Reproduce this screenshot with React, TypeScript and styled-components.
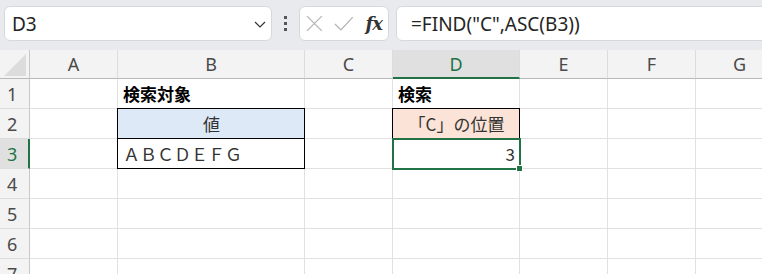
import React from 'react';
import styled, { createGlobalStyle, css } from 'styled-components';

const GlobalStyle = createGlobalStyle`
  html, body {
    margin: 0;
    padding: 0;
    background: #ffffff;
  }
  body {
    font-family: "Noto Sans", "Noto Sans CJK JP", sans-serif;
  }
`

const Page = styled.div`
  width: 762px;
  height: 274px;
  overflow: hidden;
  display: flex;
  flex-direction: column;
`

const TopBar = styled.div`
  height: 50px;
  flex-shrink: 0;
  box-sizing: border-box;
  padding: 6px 0 9px 4px;
  background: #e8eaee;
  display: flex;
  align-items: stretch;
`

const NameBox = styled.div`
  width: 268px;
  box-sizing: border-box;
  background: #ffffff;
  border: 1px solid #d6d8dc;
  border-radius: 6px;
  display: flex;
  align-items: center;
  justify-content: space-between;
  padding: 0 4px 0 7px;
  font-size: 19px;
  color: #242424;
`

const Dots = styled.div`
  width: 27px;
  display: flex;
  flex-direction: column;
  align-items: center;
  justify-content: center;
  gap: 3px;

  span {
    width: 3px;
    height: 3px;
    background: #555;
  }
`

const IconBox = styled.div`
  width: 90px;
  box-sizing: border-box;
  background: #ffffff;
  border: 1px solid #d6d8dc;
  border-radius: 6px;
  display: flex;
  align-items: center;
  padding: 0 6px 0 6px;
  gap: 11px;
`

const Fx = styled.span`
  font-family: "DejaVu Serif", "Liberation Serif", serif;
  font-style: italic;
  font-weight: bold;
  font-size: 18px;
  color: #333;
  margin-left: 1px;
  letter-spacing: -1px;
`

const FormulaBox = styled.div`
  flex: 1;
  margin-left: 7px;
  margin-right: -12px;
  box-sizing: border-box;
  background: #ffffff;
  border: 1px solid #d6d8dc;
  border-radius: 6px;
  display: flex;
  align-items: center;
  padding-left: 14px;
  font-size: 19px;
  color: #242424;
`

const Sheet = styled.div`
  display: grid;
  grid-template-columns: 30px 88px 187px 88px 127px 88px 88px 88px;
  grid-template-rows: 29px repeat(7, 30px);
  width: 794px;
`

const Corner = styled.div`
  position: relative;
  background: #f3f3f3;
  border-right: 1px solid #c8c8c8;
  border-bottom: 1px solid #b8b8b8;

  &::after {
    content: "";
    position: absolute;
    right: 3px;
    bottom: 2px;
    border-style: solid;
    border-width: 0 0 22px 22px;
    border-color: transparent transparent #dcdcdc transparent;
  }
`

const ColHeader = styled.div<{ $active?: boolean }>`
  box-sizing: border-box;
  background: ${p => (p.$active ? '#e0e0e0' : '#f3f3f3')};
  border-right: 1px solid #dcdcdc;
  border-bottom: ${p => (p.$active ? '2px solid #217346' : '1px solid #b8b8b8')};
  display: flex;
  align-items: center;
  justify-content: center;
  padding-top: ${p => (p.$active ? '1px' : '0')};
  font-size: 18px;
  color: ${p => (p.$active ? '#217346' : '#4a4a4a')};
`

const RowHeader = styled.div<{ $active?: boolean }>`
  box-sizing: border-box;
  background: ${p => (p.$active ? '#e0e0e0' : '#f3f3f3')};
  border-right: ${p => (p.$active ? '2px solid #217346' : '1px solid #c8c8c8')};
  border-bottom: 1px solid #dcdcdc;
  display: flex;
  align-items: center;
  padding-left: 7px;
  font-size: 18px;
  color: ${p => (p.$active ? '#217346' : '#4a4a4a')};
`

const Cell = styled.div<{
  $align?: 'left' | 'center' | 'right';
  $bold?: boolean;
  $fill?: string;
  $boxed?: boolean;
  $selected?: boolean;
}>`
  position: relative;
  box-sizing: border-box;
  background: ${p => p.$fill || '#ffffff'};
  border-right: 1px solid ${p => (p.$boxed ? '#000' : '#e1e1e1')};
  border-bottom: 1px solid ${p => (p.$boxed ? '#000' : '#e1e1e1')};
  display: flex;
  align-items: center;
  justify-content: ${p =>
    p.$align === 'center' ? 'center' : p.$align === 'right' ? 'flex-end' : 'flex-start'};
  padding: 0 4px 1px 5px;
  font-family: "Noto Sans CJK JP", "Noto Sans", sans-serif;
  font-size: 17px;
  font-weight: ${p => (p.$bold ? 700 : 400)};
  color: ${p => (p.$bold ? '#000' : '#333')};
  white-space: nowrap;

  ${p =>
    p.$boxed &&
    css`
      box-shadow: -1px 0 0 #000, 0 -1px 0 #000, -1px -1px 0 #000;
    `}

  ${p =>
    p.$selected &&
    css`
      &::before {
        content: "";
        position: absolute;
        left: -1px;
        top: -1px;
        right: -2px;
        bottom: -2px;
        border: 2px solid #217346;
        z-index: 2;
      }
      &::after {
        content: "";
        position: absolute;
        right: -4px;
        bottom: -4px;
        width: 5px;
        height: 5px;
        background: #217346;
        border: 1px solid #fff;
        z-index: 3;
      }
    `}
`

const columns = ['A', 'B', 'C', 'D', 'E', 'F', 'G'];

type CellData = {
  text?: string;
  align?: 'left' | 'center' | 'right';
  bold?: boolean;
  fill?: string;
  boxed?: boolean;
  selected?: boolean;
};

const data: Record<string, CellData> = {
  B1: { text: '検索対象', bold: true },
  D1: { text: '検索', bold: true },
  B2: { text: '値', align: 'center', fill: '#dde9f6', boxed: true },
  D2: { text: '「C」の位置', align: 'center', fill: '#fce3d7', boxed: true },
  B3: { text: 'ＡＢＣＤＥＦＧ', boxed: true },
  D3: { text: '3', align: 'right', selected: true },
};

export default function App() {
  const rows = [1, 2, 3, 4, 5, 6, 7];

  return (
    <Page>
      <GlobalStyle />
      <TopBar>
        <NameBox>
          <span>D3</span>
          <svg width="14" height="14" viewBox="0 0 14 14">
            <polyline points="2,5 7,10 12,5" fill="none" stroke="#333" strokeWidth="1.2" />
          </svg>
        </NameBox>
        <Dots>
          <span />
          <span />
          <span />
        </Dots>
        <IconBox>
          <svg width="17" height="17" viewBox="0 0 17 17">
            <path d="M1 1 L16 16 M16 1 L1 16" stroke="#b4b4b4" strokeWidth="1.3" fill="none" />
          </svg>
          <svg width="20" height="15" viewBox="0 0 20 15">
            <polyline points="1,8 7,14 19,1" stroke="#b4b4b4" strokeWidth="1.3" fill="none" />
          </svg>
          <Fx>fx</Fx>
        </IconBox>
        <FormulaBox>=FIND("C",ASC(B3))</FormulaBox>
      </TopBar>
      <Sheet>
        <Corner />
        {columns.map(c => (
          <ColHeader key={c} $active={c === 'D'}>
            {c}
          </ColHeader>
        ))}
        {rows.map(r => (
          <React.Fragment key={r}>
            <RowHeader $active={r === 3}>{r}</RowHeader>
            {columns.map(c => {
              const d = data[`${c}${r}`] || {};
              return (
                <Cell
                  key={c}
                  $align={d.align}
                  $bold={d.bold}
                  $fill={d.fill}
                  $boxed={d.boxed}
                  $selected={d.selected}
                >
                  {d.text}
                </Cell>
              );
            })}
          </React.Fragment>
        ))}
      </Sheet>
    </Page>
  );
}
